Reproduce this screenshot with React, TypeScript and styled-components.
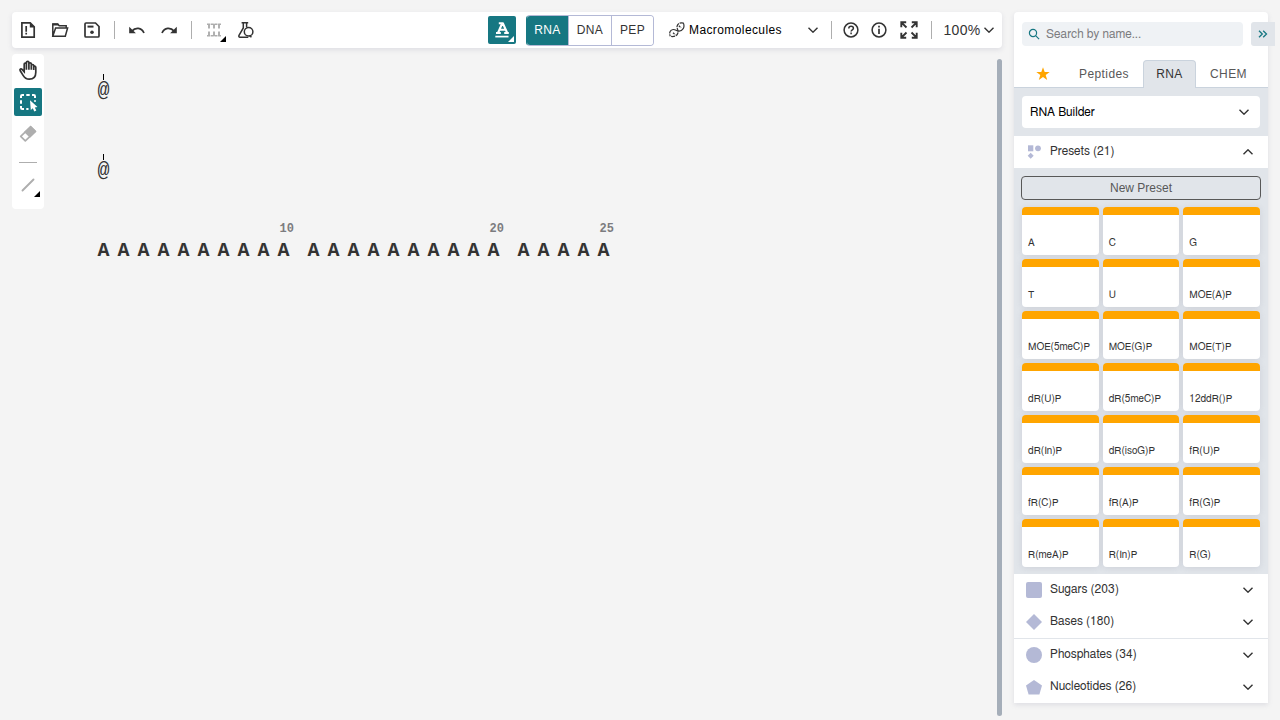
import React from 'react';
import styled, { createGlobalStyle, css } from 'styled-components';

const Global = createGlobalStyle`
  *, *::before, *::after { box-sizing: border-box; }
  html, body { margin: 0; padding: 0; }
  body { background: #f4f4f4; color: #333333; font: 14px/1 "Liberation Sans", Arial, sans-serif; overflow: hidden; }
  button, input { font-family: inherit; margin: 0; }
  svg { display: block; flex: none; }
`;
const grotesque = 'FreeSans, "Liberation Sans", Arial, sans-serif';

const Page = styled.div`
  display: flex;
  gap: 12px;
  width: 1280px;
  height: 720px;
  padding: 12px 0 0 12px;
  background: #f4f4f4;
`;
const Workspace = styled.main`
  width: 990px;
  height: 708px;
  display: flex;
  flex-direction: column;
`;
const Toolbar = styled.header`
  display: flex;
  align-items: center;
  height: 36px;
  flex: none;
  background: #fff;
  border-radius: 4px;
  box-shadow: 0 2px 5px rgba(103, 104, 132, 0.15);
`;
const ToolButton = styled.button<{ $active?: boolean; $muted?: boolean; $width?: number }>`
  position: relative;
  display: flex;
  align-items: center;
  justify-content: center;
  flex: none;
  width: ${p => p.$width ?? 32}px;
  height: 28px;
  padding: 0;
  border: 0;
  border-radius: 2px;
  background: ${p => (p.$active ? '#167782' : 'transparent')};
  color: ${p => (p.$active ? '#fff' : p.$muted ? '#aeaeae' : '#333333')};
`;
const Corner = styled.i<{ $light?: boolean; $inset?: number }>`
  position: absolute;
  right: ${p => p.$inset ?? 2}px;
  bottom: 2px;
  width: 0;
  height: 0;
  border: solid transparent;
  border-width: 0 0 6px 6px;
  border-bottom-color: ${p => (p.$light ? '#fff' : '#000')};
`;
const Divider = styled.span<{ $gap: string }>`
  width: 1px;
  height: 18px;
  flex: none;
  margin: ${p => p.$gap};
  background: #aeaeae;
`;
const Spacer = styled.span`
  flex: 1;
`;
const Segments = styled.div`
  display: flex;
  width: 128px;
  height: 31px;
  margin: 0 15px 0 10px;
  border: 1px solid #b4b9d6;
  border-left-color: #167782;
  border-radius: 4px;
  overflow: hidden;
`;
const Segment = styled.button<{ $active?: boolean; $width: number }>`
  width: ${p => p.$width}px;
  padding: 0;
  border: 0;
  font-size: 12px;
  letter-spacing: 0.4px;
  color: ${p => (p.$active ? '#fff' : '#333333')};
  background: ${p => (p.$active ? '#167782' : '#fff')};
  & + & { border-left: 1px solid #b4b9d6; }
`;
const ModeSelect = styled.div`
  display: flex;
  align-items: center;
  width: 149px;
  margin-right: 2px;
  color: #000;
  font-size: 12px;
  letter-spacing: 0.4px;
  span { flex: 1; padding-left: 4px; }
`;
const Zoom = styled.div`
  display: flex;
  align-items: center;
  width: 59px;
  padding-left: 0.5px;
  font-size: 14px;
  letter-spacing: 0.3px;
  svg { margin-left: 3.5px; }
`;
const Body = styled.div`
  display: flex;
  flex: 1;
  min-height: 0;
  padding-top: 6px;
`;
const Tools = styled.nav`
  display: flex;
  flex-direction: column;
  align-items: center;
  gap: 4px;
  width: 32px;
  height: 155px;
  padding-top: 2px;
  background: #fff;
  border-radius: 4px;
`;
const ToolRule = styled.span`
  width: 18px;
  height: 1px;
  margin: 10px 0 4px;
  background: #aeaeae;
  flex: none;
`;
const Canvas = styled.section`
  flex: 1;
  padding: 20px 0 0 53.5px;
  font-family: "Liberation Mono", "Courier New", monospace;
`;
const EmptyChain = styled.div`
  height: 80px;
  width: 12px;
  font-size: 20px;
  line-height: 22px;
  &::before {
    content: "";
    display: block;
    width: 1px;
    height: 6px;
    margin-left: 5.5px;
    background: #000;
  }
`;
const Chain = styled.div`
  display: flex;
  gap: 10px;
  margin-top: -13px;
`;
const Block = styled.div`
  display: flex;
`;
const Monomer = styled.div`
  display: flex;
  flex-direction: column;
  width: 20px;
  font-weight: 700;
  font-size: 20px;
  line-height: 28px;
`;
const Index = styled.span`
  height: 16px;
  padding-left: 2px;
  font-size: 12px;
  line-height: 16px;
  color: #7c7c7f;
`;
const Scrollbar = styled.div`
  width: 5px;
  height: 657px;
  margin-top: 4.5px;
  border-radius: 3px;
  background: #a5aeb9;
`;

const Library = styled.aside`
  display: flex;
  flex-direction: column;
  width: 254px;
  height: 691px;
  background: #fff;
  border-radius: 4px 4px 0 0;
  box-shadow: 0 2px 5px rgba(103, 104, 132, 0.15);
`;
const SearchRow = styled.div`
  display: flex;
  width: 261px;
  gap: 8px;
  padding: 10px 0 0 8px;
  height: 48px;
`;
const SearchBox = styled.label`
  display: flex;
  align-items: center;
  width: 221px;
  height: 24px;
  padding-left: 6px;
  gap: 6px;
  color: #167782;
  background: #eff2f5;
  border-radius: 4px;
`;
const SearchInput = styled.input`
  width: 180px;
  padding: 0;
  border: 0;
  background: none;
  font-family: ${grotesque};
  font-size: 12px;
  letter-spacing: 0.1px;
  &::placeholder { color: #7c7c7f; }
`;
const Collapse = styled.button`
  display: flex;
  align-items: center;
  justify-content: center;
  width: 24px;
  height: 24px;
  padding: 0;
  border: 0;
  border-radius: 3px 0 0 3px;
  color: #167782;
  background: #e1e5ea;
`;
const Tabs = styled.div`
  display: flex;
  height: 28px;
  flex: none;
`;
const Tab = styled.button<{ $active?: boolean; $width: number; $pad?: string }>`
  display: flex;
  align-items: center;
  justify-content: center;
  width: ${p => p.$width}px;
  padding: ${p => p.$pad ?? '0'};
  font-size: 12px;
  letter-spacing: 0.4px;
  color: #585858;
  background: none;
  border: solid #cad3dd;
  border-width: 0 0 1px;
  ${p => p.$active && css`
    color: #333333;
    background: #e1e5ea;
    border-width: 1px 1px 0;
    border-radius: 4px 4px 0 0;
  `}
`;
const BuilderArea = styled.div`
  height: 48px;
  padding: 8px;
  background: #e1e5ea;
`;
const Builder = styled.div`
  display: flex;
  align-items: center;
  justify-content: space-between;
  height: 32px;
  padding: 0 11px 0 8px;
  font-family: ${grotesque};
  font-size: 12px;
  letter-spacing: 0.08px;
  color: #000;
  background: #fff;
  border-radius: 4px;
`;
const Heading = styled.div<{ $line?: boolean; $height?: number }>`
  display: flex;
  align-items: center;
  height: ${p => p.$height ?? 32}px;
  flex: none;
  padding: 0 15px 0 12px;
  font-family: ${grotesque};
  font-size: 12px;
  letter-spacing: 0.08px;
  border-bottom: ${p => (p.$line ? '1px solid #e1e5ea' : '0')};
  span { flex: 1; padding: 0 0 2px 8px; }
`;
const PresetArea = styled.div`
  height: 406px;
  flex: none;
  padding: 8px;
  background: #e1e5ea;
`;
const NewPreset = styled.button`
  display: block;
  width: 240px;
  height: 24px;
  margin: 0 0 7px -1px;
  padding: 0;
  border: 1px solid #585858;
  border-radius: 4px;
  background: none;
  color: #585858;
  font-size: 12px;
`;
const PresetGrid = styled.div`
  display: grid;
  grid-template-columns: repeat(3, 1fr);
  grid-auto-rows: 48px;
  gap: 4px;
`;
const Card = styled.div`
  display: flex;
  align-items: flex-end;
  padding: 0 0 6px 6px;
  overflow: hidden;
  border-radius: 4px;
  background: linear-gradient(#ffa500 8px, #fff 8px);
  box-shadow: 0 1px 6px rgba(103, 104, 132, 0.16);
  font-family: ${grotesque};
  font-size: 10px;
  letter-spacing: 0.05px;
  line-height: 12px;
  white-space: nowrap;
`;

const Chevron = ({ up = false }: { up?: boolean }) => (
  <svg width="10" height="6" viewBox="0 0 10 6" fill="none" stroke="#333" strokeWidth="1.4">
    <path d={up ? 'M.5 5.3 5 .8l4.5 4.5' : 'M.5.7 5 5.2 9.5.7'} />
  </svg>
);

const icon = { width: 20, height: 20, viewBox: '0 0 20 20', fill: 'none', stroke: 'currentColor', strokeWidth: 1.7 };

const NewIcon = () => (
  <svg {...icon}><path d="M3.9 2.9h8.3l4 4v10.3H3.9z" /><path d="M11.8 2.5v4.9h4.8z" fill="currentColor" stroke="none" /><path d="M8.2 6v5.7M8.2 12.8v1.7" /></svg>
);
const OpenIcon = () => (
  <svg {...icon} strokeWidth="1.5"><path d="M4.8 16.2H2.8V4h5l1.4 1.7h7v2.1M2.8 16.2 5.6 8h12l-2.3 8.2z" /><path d="M2.5 3.5h5.4l1.5 2.1H2.5z" fill="currentColor" stroke="none" /></svg>
);
const SaveIcon = () => (
  <svg {...icon}>
    <path d="M4 3h9.5L17 6.5V16a1 1 0 0 1-1 1H4a1 1 0 0 1-1-1V4a1 1 0 0 1 1-1z" />
    <path d="M5.5 6.6h6" strokeWidth="2" /><circle cx="10" cy="12.3" r="1.8" fill="currentColor" stroke="none" />
  </svg>
);
const UndoIcon = ({ flip = false }: { flip?: boolean }) => (
  <svg {...icon}>
    <g transform={flip ? 'translate(20 0) scale(-1 1)' : undefined}>
      <path d="M4.6 11.4C8.6 6.8 14.5 7.4 17 13" strokeWidth="1.7" />
      <path d="M2.2 6.7v6.6h6.7z" fill="currentColor" stroke="none" />
    </g>
  </svg>
);
const LayoutIcon = () => (
  <svg {...icon}>
    <path d="M3 4.2h14M3 15.8h14" strokeWidth="1.5" strokeDasharray="3.1 .6" />
    <path d="M5 4v4.4M10 4v4.4M15 4v4.4M5 11.6V16M10 11.6V16M15 11.6V16" strokeWidth="1.9" />
  </svg>
);
const FlaskIcon = () => (
  <svg {...icon} strokeWidth="1.5">
    <path d="M5.6 2.8h6.6M7.3 3v5L3 15.4c-.5 1 0 1.8.9 1.8h8.4M10.6 3v4" />
    <circle cx="12.6" cy="11.8" r="4.3" /><path d="m13.5 16 2 1" />
  </svg>
);
const TextIcon = () => (
  <svg {...icon} width="28" height="28" viewBox="0 0 28 28">
    <path d="m10.2 16.5 3.9-9h.9l4 9M8 17h4.8M16.2 17h4.6M11 13.8h6.8M10.8 7.3h4.4" strokeWidth="2.1" />
    <path d="M7.3 20.6h13.2" strokeWidth="1.7" />
  </svg>
);
const DnaIcon = () => (
  <svg width="16" height="16" viewBox="0 0 16 16" fill="none" stroke="#333" strokeWidth="1.2">
    <path d="M1 9.7C2 7.8 4.5 7 7 8.3s5.3 1.2 7.2-1.6c1-1.6.9-3.8.2-5.6" />
    <path d="M14.7 1.1c-3.4-.8-6 .2-6.6 3-.5 2.5 1.7 4.2.7 7.1-.9 2.8-3.9 3.9-7.5 3.1" strokeDasharray="4 .8" />
    <path d="M1 9.6c-.5 1.7-.3 3.2.3 4.7M4 10.7l2.2 2M9.8 3.7l2.3 2.1" strokeDasharray="2 .7" />
  </svg>
);
const HelpIcon = () => (
  <svg {...icon}>
    <circle cx="10" cy="10" r="6.9" strokeWidth="1.5" />
    <path d="M7.8 8.4c0-1.4 1-2.2 2.3-2.2s2.3.8 2.3 2c0 1.6-2.3 1.7-2.3 3.4M10.1 12.5v1.7" strokeWidth="1.5" />
  </svg>
);
const InfoIcon = () => (
  <svg {...icon}><circle cx="10" cy="10" r="6.9" strokeWidth="1.5" /><path d="M10 8.7v5.2M10 5.8v1.8" strokeWidth="1.7" /></svg>
);
const FullscreenIcon = () => (
  <svg {...icon} strokeWidth="1.9">
    <path d="M2.3 7.2V2.3h4.9M2.3 2.3l5.2 5.2M12.8 2.3h4.9v4.9M17.7 2.3l-5.2 5.2M2.3 12.8v4.9h4.9M2.3 17.7l5.2-5.2M17.7 12.8v4.9h-4.9M17.7 17.7l-5.2-5.2" />
  </svg>
);
const HandIcon = () => (
  <svg {...icon} width="22" height="22" viewBox="0 0 22 22">
    <path d="M7.2 12.8V5.1c0-1.4 2.2-1.4 2.2 0V3.5c0-1.5 2.5-1.5 2.5 0V5c0-1.6 2.4-1.5 2.4.1v1.5c0-1.5 2.4-1.5 2.4.2V8c0-1.3 2.1-1.2 2.1.4v4.8c0 4.6-2.4 7-6.5 7-3.2 0-4.8-1.3-6.2-3.8l-3-4.9c-.6-1.5.9-2.2 2-1.1zM9.4 5v5.8M11.9 4.6v6.2M14.3 5.5v5.3M16.7 7v4" strokeWidth="1.7" />
  </svg>
);
const SelectIcon = () => (
  <svg {...icon}>
    <path d="M3 6V4.2C3 3.5 3.5 3 4.2 3H6M8.3 3h3.4M14 3h1.8c.7 0 1.2.5 1.2 1.2V6M3 8.3v3.4M3 14v1.8c0 .7.5 1.2 1.2 1.2H6M8.3 17h2.2M17 8.3v1.4" strokeWidth="2" />
    <path d="m12 8.2.8 9.8 2-1.7 1.5 3.1 2-1-1.5-3 2.7-.5z" fill="currentColor" stroke="none" />
  </svg>
);
const EraserIcon = () => (
  <svg {...icon}>
    <path d="M12.6 2.8 2.7 12.3l4.6 4.6L17.3 7.4z" strokeWidth="1.7" strokeLinejoin="round" />
    <path d="M12.6 2.8 7.2 8l4.8 4.5 5.3-5.1z" fill="currentColor" />
  </svg>
);
const LineIcon = () => <svg {...icon}><path d="M4.5 15.5 15.5 4.5" strokeWidth="1.9" strokeLinecap="round" /></svg>;

const kindIcons: Record<string, React.ReactNode> = {
  preset: <><path d="M2 1.3h5.3v6H2z" /><circle cx="12" cy="4.3" r="2.9" /><path d="m4.7 8.7 3 3-3 3-3-3z" /></>,
  sugar: <rect width="16" height="16" rx="2" />,
  base: <path d="m8 0 8 8-8 8-8-8z" />,
  phosphate: <circle cx="8" cy="8" r="8" />,
  nucleotide: <path d="m8 1 8 5.5-2.6 9H2.6L0 6.5z" />,
};
const KindIcon = ({ kind }: { kind: string }) => (
  <svg width="16" height="16" viewBox="0 0 16 16" fill="#b4b9d6">{kindIcons[kind]}</svg>
);

const presets = [
  'A', 'C', 'G', 'T', 'U', 'MOE(A)P', 'MOE(5meC)P', 'MOE(G)P', 'MOE(T)P', 'dR(U)P', 'dR(5meC)P',
  '12ddR()P', 'dR(In)P', 'dR(isoG)P', 'fR(U)P', 'fR(C)P', 'fR(A)P', 'fR(G)P', 'R(meA)P', 'R(In)P', 'R(G)',
];
const blocks = [
  { size: 10, label: 10 },
  { size: 10, label: 20 },
  { size: 5, label: 25 },
];

export default function App() {
  return (
    <>
      <Global />
      <Page>
        <Workspace>
          <Toolbar>
            <ToolButton><NewIcon /></ToolButton>
            <ToolButton><OpenIcon /></ToolButton>
            <ToolButton><SaveIcon /></ToolButton>
            <Divider $gap="0 6px" />
            <ToolButton><UndoIcon /></ToolButton>
            <ToolButton><UndoIcon flip /></ToolButton>
            <Divider $gap="0 6px" />
            <ToolButton $muted><LayoutIcon /><Corner $inset={4} /></ToolButton>
            <ToolButton><FlaskIcon /></ToolButton>
            <Spacer />
            <ToolButton $active $width={28}><TextIcon /><Corner $light /></ToolButton>
            <Segments>
              <Segment $active $width={41}>RNA</Segment>
              <Segment $width={43}>DNA</Segment>
              <Segment $width={42}>PEP</Segment>
            </Segments>
            <ModeSelect><DnaIcon /><span>Macromolecules</span><Chevron /></ModeSelect>
            <Divider $gap="0 5px 0 11px" />
            <ToolButton $width={28}><HelpIcon /></ToolButton>
            <ToolButton $width={28}><InfoIcon /></ToolButton>
            <ToolButton><FullscreenIcon /></ToolButton>
            <Divider $gap="0 11px 0 6px" />
            <Zoom>100%<Chevron /></Zoom>
          </Toolbar>
          <Body>
            <Tools>
              <ToolButton $width={28}><HandIcon /></ToolButton>
              <ToolButton $active $width={28}><SelectIcon /></ToolButton>
              <ToolButton $muted $width={28}><EraserIcon /></ToolButton>
              <ToolRule />
              <ToolButton $muted $width={28}><LineIcon /><Corner /></ToolButton>
            </Tools>
            <Canvas>
              <EmptyChain>@</EmptyChain>
              <EmptyChain>@</EmptyChain>
              <Chain>
                {blocks.map(block => (
                  <Block key={block.label}>
                    {Array.from({ length: block.size }, (_, i) => (
                      <Monomer key={i}>
                        <Index>{i === block.size - 1 ? block.label : ''}</Index>A
                      </Monomer>
                    ))}
                  </Block>
                ))}
              </Chain>
            </Canvas>
            <Scrollbar />
          </Body>
        </Workspace>
        <Library>
          <SearchRow>
            <SearchBox>
              <svg width="12" height="12" viewBox="0 0 12 12" fill="none" stroke="currentColor" strokeWidth="1.2">
                <circle cx="5" cy="5" r="3.6" /><path d="m7.6 7.6 3.5 3.5" />
              </svg>
              <SearchInput placeholder="Search by name..." />
            </SearchBox>
            <Collapse>
              <svg width="10" height="8" viewBox="0 0 10 8" fill="none" stroke="currentColor" strokeWidth="1.3">
                <path d="m1 .7 3.3 3.3L1 7.3M5.2.7 8.5 4 5.2 7.3" />
              </svg>
            </Collapse>
          </SearchRow>
          <Tabs>
            <Tab $width={51} $pad="0 0 0 7px">
              <svg width="14" height="14" viewBox="0 0 14 14" fill="#ffa500">
                <path d="m7 .3 1.7 4.6h5l-4 3 1.5 5L7 10l-4.2 2.9 1.5-5-4-3h5z" />
              </svg>
            </Tab>
            <Tab $width={78}>Peptides</Tab>
            <Tab $width={53} $active $pad="0 0 2px">RNA</Tab>
            <Tab $width={72} $pad="0 7px 0 0">CHEM</Tab>
          </Tabs>
          <BuilderArea><Builder>RNA Builder<Chevron /></Builder></BuilderArea>
          <Heading><KindIcon kind="preset" /><span>Presets (21)</span><Chevron up /></Heading>
          <PresetArea>
            <NewPreset>New Preset</NewPreset>
            <PresetGrid>{presets.map(name => <Card key={name}>{name}</Card>)}</PresetGrid>
          </PresetArea>
          <Heading><KindIcon kind="sugar" /><span>Sugars (203)</span><Chevron /></Heading>
          <Heading $line $height={33}><KindIcon kind="base" /><span>Bases (180)</span><Chevron /></Heading>
          <Heading><KindIcon kind="phosphate" /><span>Phosphates (34)</span><Chevron /></Heading>
          <Heading><KindIcon kind="nucleotide" /><span>Nucleotides (26)</span><Chevron /></Heading>
        </Library>
      </Page>
    </>
  );
}
